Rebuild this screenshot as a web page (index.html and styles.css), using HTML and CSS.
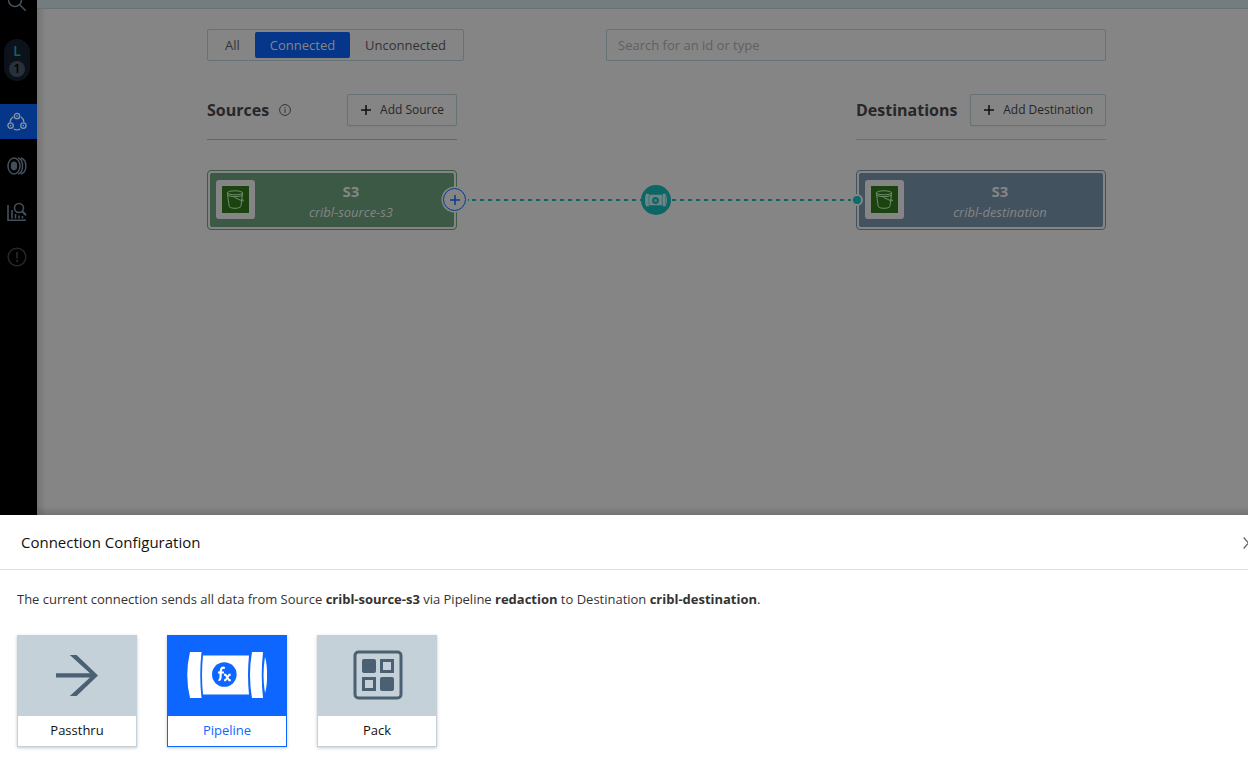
FILE: index.html
```html
<!DOCTYPE html>
<html lang="en">
<head>
<meta charset="utf-8">
<title>Connection Configuration</title>
<link rel="stylesheet" href="styles.css">
</head>
<body>
<svg class="defs" width="0" height="0" aria-hidden="true">
  <symbol id="bucket" viewBox="0 0 27 27">
    <rect width="27" height="27" fill="#1b4310"/>
    <g fill="none" stroke="#718b6c" stroke-width="1">
      <ellipse cx="13" cy="6.800" rx="7.600" ry="2"/>
      <path d="M5.400 7 7.200 20.500c1.500 2.400 10.200 2.400 11.700 0L20.600 7M6 9.500c3 1.500 11 1.500 14.300 0M12.500 11.500l7.500 3.300c2 .6 2.200-.5.200-1.500"/>
    </g>
  </symbol>
  <symbol id="plus" viewBox="0 0 10 10"><path d="M5 0v10M0 5h10" fill="none" stroke="currentColor" stroke-width="1.500"/></symbol>
  <symbol id="pipe" viewBox="0 0 80 48">
    <path d="M3 1h11.500Q12 24 14.500 47H3Q-2.500 24 3 1zM16 4.500h46Q60 24 62 43.500H16Q14 24 16 4.500zM65 1h11Q73.500 24 76 47H65Q61 24 65 1zM78 6c2.800 8 2.800 28 0 36Q75 24 78 6z" fill="currentColor"/>
  </symbol>
</svg>
<div class="app">
  <nav class="sidebar">
    <svg class="nav-search" width="20" height="20" viewBox="0 0 20 20"><g fill="none" stroke="#43505b" stroke-width="1.500"><circle cx="8" cy="8" r="6.500"/><path d="m12.700 12.700 6 6"/></g></svg>
    <div class="workspace"><span class="letter">L</span><span class="count">1</span></div>
    <a class="nav-item active">
      <svg width="20" height="20" viewBox="0 0 20 20"><g fill="none" stroke="#8795a4" stroke-width="1.300"><circle cx="10" cy="4" r="2.700"/><circle cx="3.600" cy="13.600" r="2.700"/><circle cx="16.400" cy="13.600" r="2.700"/><path d="M6.300 4.800Q3.500 6.500 3.100 10M13.700 4.800Q16.500 6.500 16.900 10M6.800 17.100Q10 18.600 13.200 17.100"/></g><g fill="#8795a4"><circle cx="10" cy="4" r=".8"/><circle cx="3.600" cy="13.600" r=".8"/><circle cx="16.400" cy="13.600" r=".8"/></g></svg>
    </a>
    <a class="nav-item raised">
      <svg width="20" height="20" viewBox="0 0 20 20"><g fill="none" stroke="#43505b" stroke-width="1.500"><ellipse cx="7" cy="10" rx="6" ry="8"/><path d="M11 2c6 1.500 6 14.500 0 16M14 2c6.500 2 6.500 14 0 16"/></g><ellipse cx="7" cy="10" rx="3.200" ry="4.400" fill="#43505b"/></svg>
    </a>
    <a class="nav-item">
      <svg width="20" height="20" viewBox="0 0 20 20"><g fill="none" stroke="#43505b" stroke-width="1.600"><path d="M1 3v15.300h18M5 8v8.500M8.500 12v4.500M12 13.500v3M15.500 14v2.500"/><circle cx="12" cy="6" r="4.500"/><path d="m15.200 9.200 3.800 4" stroke-width="2"/></g></svg>
    </a>
    <a class="nav-item">
      <svg width="20" height="20" viewBox="0 0 20 20"><circle cx="10" cy="10" r="8.800" fill="none" stroke="#22282e" stroke-width="1.500"/><path d="M10 5v6.500M10 13v2" stroke="#22282e" stroke-width="1.700"/></svg>
    </a>
  </nav>
  <main class="main">
    <div class="topbar"></div>
    <div class="content">
      <div class="filters">
        <div class="segmented"><span class="all">All</span><span class="selected">Connected</span><span class="rest">Unconnected</span></div>
        <div class="search">Search for an id or type</div>
      </div>
      <div class="heads">
        <div class="head">
          <h2>Sources</h2>
          <svg class="info" width="12" height="12" viewBox="0 0 12 12"><circle cx="6" cy="6" r="5.400" fill="none" stroke="#333" stroke-width="1"/><path d="M6 5v4M6 3v1.200" stroke="#333"/></svg>
          <button><svg width="10" height="10"><use href="#plus"/></svg>Add Source</button>
        </div>
        <div class="head destination-head">
          <h2>Destinations</h2>
          <button><svg width="10" height="10"><use href="#plus"/></svg>Add Destination</button>
        </div>
      </div>
      <div class="flow">
        <div class="node source">
          <div class="node-body">
            <div class="thumb"><svg width="27" height="27"><use href="#bucket"/></svg></div>
            <div class="label"><b>S3</b><i>cribl-source-s3</i></div>
          </div>
          <span class="add-port"><svg width="10" height="10"><use href="#plus"/></svg></span>
        </div>
        <div class="link">
          <svg class="wire" width="399" height="2" viewBox="0 0 399 2"><path d="M11 1h1M15 1h169M215 1h180" fill="none" stroke="#0d6666" stroke-width="2" stroke-dasharray="4 4"/></svg>
          <span class="badge"><svg width="22" height="14"><use href="#pipe"/></svg><span class="dial"></span></span>
        </div>
        <div class="node target">
          <span class="in-port"></span>
          <div class="node-body">
            <div class="thumb"><svg width="27" height="27"><use href="#bucket"/></svg></div>
            <div class="label"><b>S3</b><i>cribl-destination</i></div>
          </div>
        </div>
      </div>
    </div>
  </main>
</div>
<section class="drawer">
  <header class="drawer-head">
    <h1>Connection Configuration</h1>
    <svg class="close" width="11" height="12" viewBox="0 0 11 12"><path d="m.7.500 9.600 11M10.300.5.700 11.500" fill="none" stroke="#666" stroke-width="1.300"/></svg>
  </header>
  <div class="drawer-body">
    <p>The current connection sends all data from Source <b>cribl-source-s3</b> via Pipeline <b>redaction</b> to Destination <b>cribl-destination</b>.</p>
    <div class="options">
      <div class="option">
        <div class="picture"><svg width="42" height="41" viewBox="0 0 42 41"><path d="M0 18.300h34L13.800 0h6.800L42 20.500 20.600 41h-6.800L34 22.400H0z" fill="#4b6072"/></svg></div>
        <span>Passthru</span>
      </div>
      <div class="option chosen">
        <div class="picture">
          <svg width="80" height="48" viewBox="0 0 80 48">
            <use href="#pipe" color="#fff"/>
            <circle cx="37.300" cy="23.500" r="12.300" fill="#0d66ff"/>
            <path d="M37.800 17.200q-3.600-1.800-4 2.800l-.3 6.500q-.2 2.700-2 2.200M31 21.500h6" fill="none" stroke="#fff" stroke-width="2.200"/>
            <path d="M37 23.700h1.500l3.700 5.600h1.600M43.700 23.700h-1.400l-3.900 5.600H37" fill="none" stroke="#fff" stroke-width="1.900"/>
          </svg>
        </div>
        <span>Pipeline</span>
      </div>
      <div class="option">
        <div class="picture pack"><svg width="50" height="50" viewBox="0 0 50 50"><g fill="none" stroke="#4b6072" stroke-width="3"><rect x="2" y="2" width="46" height="46" rx="3.500"/><rect x="28.500" y="10.500" width="11" height="11"/><rect x="10.500" y="28.500" width="11" height="11"/></g><rect x="9" y="9" width="14" height="14" rx="2" fill="#4b6072"/><rect x="27" y="27" width="14" height="14" rx="2" fill="#4b6072"/></svg></div>
        <span>Pack</span>
      </div>
    </div>
  </div>
</section>
</body>
</html>
```
FILE: styles.css
```css
* { box-sizing: border-box; }
body {
  margin: 0;
  width: 1248px;
  height: 768px;
  overflow: hidden;
  display: flex;
  flex-direction: column;
  background: #fff;
  font-family: "Open Sans", "Noto Sans", sans-serif;
  font-size: 13px;
  color: #333;
}
svg { display: block; flex: none; }
.defs { position: absolute; }
h1, h2, p { margin: 0; }

.app { display: flex; height: 515px; flex: none; overflow: hidden; }
.sidebar {
  width: 37px;
  flex: none;
  background: #000;
  display: flex;
  flex-direction: column;
  padding-right: 3px;
  align-items: center;
}
.nav-search { margin-top: -8px; }
.workspace {
  width: 26px;
  height: 42px;
  margin: 27px 0 23px;
  border-radius: 13px;
  background: #0c1219;
  display: flex;
  flex-direction: column;
  align-items: center;
  font-weight: 600;
}
.letter { height: 22px; line-height: 24px; font-size: 14px; color: #0d6666; }
.count {
  width: 16px;
  height: 16px;
  line-height: 16px;
  border-radius: 8px;
  background: #28313b;
  color: #000;
  text-align: center;
  font-size: 12px;
}
.nav-item {
  width: 37px;
  height: 35px;
  margin-right: -3px;
  margin-bottom: 10px;
  padding-right: 3px;
  display: flex;
  align-items: center;
  justify-content: center;
  flex: none;
}
.nav-item.active { background: #05368a; }
.nav-item.raised { padding-bottom: 2px; }

.main {
  flex: 1;
  background:
    linear-gradient(to right, rgba(0,0,0,.13), transparent 9px),
    linear-gradient(to top, rgba(0,0,0,.13), transparent 9px),
    #858585;
}
.topbar { height: 9px; background: #757c80; border-bottom: 1px solid #667276; }
.content { width: 899px; margin-left: 170px; padding-top: 20px; }
.filters { display: flex; justify-content: space-between; }
.segmented {
  display: flex;
  width: 257px;
  height: 32px;
  padding: 2px;
  border: 1px solid #667276;
  border-radius: 2px;
  line-height: 26px;
  text-align: center;
}
.all { width: 45px; }
.selected { width: 95px; background: #05368a; color: #858585; border-radius: 2px; }
.rest { width: 111px; }
.search {
  width: 500px;
  height: 32px;
  padding-left: 11px;
  border: 1px solid #667276;
  border-radius: 2px;
  line-height: 30px;
  color: #606060;
}
.heads { display: flex; justify-content: space-between; margin-top: 33px; }
.head {
  width: 250px;
  height: 46px;
  display: flex;
  align-items: flex-start;
  border-bottom: 1px solid #646464;
}
.destination-head { border-color: #627080; }
h2 { font-size: 16px; line-height: 32px; font-weight: 700; color: #272727; }
.info { margin: 10px 0 0 10px; }
button {
  height: 32px;
  margin-left: auto;
  padding: 0 12px 1px 13px;
  display: flex;
  align-items: center;
  gap: 9px;
  border: 1px solid #667276;
  border-radius: 2px;
  background: transparent;
  box-shadow: 0 1px 1px rgba(0,0,0,.04);
  font: 12px "Open Sans", sans-serif;
  color: #262626;
}
button svg { color: #111; margin-top: 1px; }

.flow { display: flex; margin-top: 30px; }
.node {
  position: relative;
  width: 250px;
  height: 60px;
  padding: 2px;
  border: 1px solid #3b5945;
  border-radius: 4px;
}
.target { border-color: #43525f; }
.node-body {
  height: 54px;
  padding: 0 6px;
  display: flex;
  align-items: center;
  border-radius: 2px;
  background: #3b5945;
}
.target .node-body { background: #43525f; }
.thumb { width: 39px; height: 39px; padding: 6px; border-radius: 3px; background: #858585; margin-top: -1px; }
.label {
  flex: 1;
  padding-top: 4px;
  padding-right: 1px;
  display: flex;
  flex-direction: column;
  align-items: center;
  color: #858585;
}
.label b { font-size: 15px; line-height: 21px; }
.label i { font-size: 13px; line-height: 21px; }
.add-port {
  position: absolute;
  z-index: 1;
  right: -10px;
  top: 17px;
  width: 23px;
  height: 23px;
  display: flex;
  align-items: center;
  justify-content: center;
  border: 1px solid #073b88;
  border-radius: 50%;
  background: #858585;
  box-shadow: 0 0 0 1.500px #858585;
  color: #073b88;
}
.in-port {
  position: absolute;
  left: -6px;
  top: 23px;
  width: 12px;
  height: 12px;
  border: 2px solid #858585;
  border-radius: 50%;
  background: #0d6b6b;
}
.link { position: relative; width: 399px; display: flex; align-items: center; }
.badge {
  position: absolute;
  left: 184px;
  top: 15px;
  width: 30px;
  height: 30px;
  border-radius: 50%;
  background: #0d6666;
  color: #6d8585;
  display: flex;
  align-items: center;
  justify-content: center;
}
.dial {
  position: absolute;
  left: 11px;
  top: 11.500px;
  width: 7px;
  height: 7px;
  border: 2px solid #0d6666;
  border-radius: 50%;
  background: #4c7d7d;
}

.drawer { flex: 1; background: #fff; }
.drawer-head {
  height: 55px;
  padding-left: 21px;
  display: flex;
  align-items: center;
  border-bottom: 1px solid #e0e0e0;
}
h1 { font-size: 15px; line-height: 22px; font-weight: 400; color: #111; }
.close { margin-left: auto; margin-right: -6px; margin-top: 1px; }
.drawer-body { padding: 19px 17px; }
p { line-height: 20px; letter-spacing: -.01px; color: #333; }
.options { display: flex; gap: 30px; margin-top: 26px; }
.option {
  width: 120px;
  height: 112px;
  border: 1px solid #c4d1d9;
  box-shadow: 0 1px 3px rgba(0,0,0,.22);
  text-align: center;
  color: #111;
}
.picture {
  height: 80px;
  padding-bottom: 2px;
  display: flex;
  align-items: center;
  justify-content: center;
  background: #c4d1d9;
}
.pack { padding-left: 1px; }
.option span { display: block; line-height: 29px; }
.chosen { border-color: #0d66ff; color: #0d66ff; }
.chosen .picture { background: #0d66ff; }
```
